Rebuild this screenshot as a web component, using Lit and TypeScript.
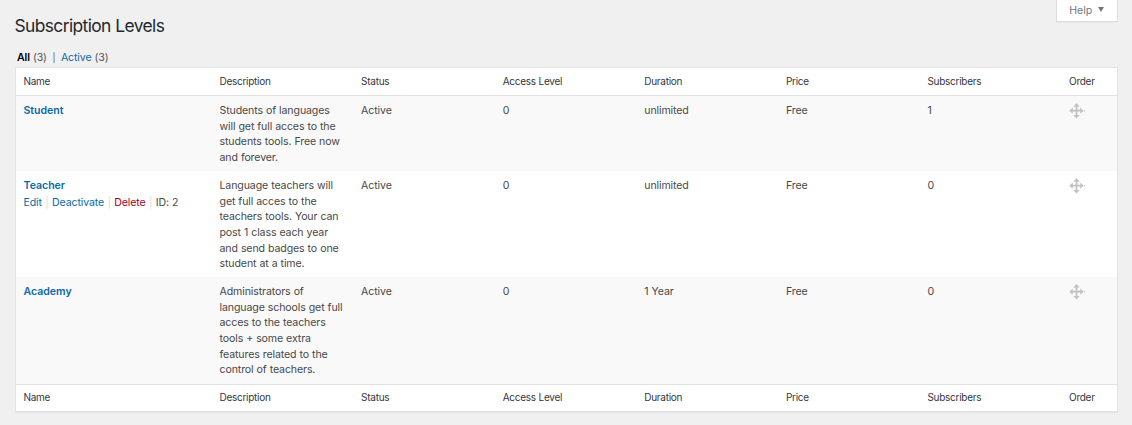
import { LitElement, html, css, svg } from "lit";
import { customElement } from "lit/decorators.js";

interface Level {
  name: string;
  lines: string[];
  duration: string;
  subscribers: number;
  actions?: boolean;
  id: number;
}

const COLUMNS = ["Name", "Description", "Status", "Access Level", "Duration", "Price", "Subscribers", "Order"];

const LEVELS: Level[] = [
  {
    id: 1,
    name: "Student",
    lines: ["Students of languages", "will get full acces to the", "students tools. Free now", "and forever."],
    duration: "unlimited",
    subscribers: 1,
  },
  {
    id: 2,
    name: "Teacher",
    lines: ["Language teachers will", "get full acces to the", "teachers tools. Your can", "post 1 class each year", "and send badges to one", "student at a time."],
    duration: "unlimited",
    subscribers: 0,
    actions: true,
  },
  {
    id: 3,
    name: "Academy",
    lines: ["Administrators of", "language schools get full", "acces to the teachers", "tools + some extra", "features related to the", "control of teachers."],
    duration: "1 Year",
    subscribers: 0,
  },
];

const moveIcon = html`<svg class="move" width="17" height="16" viewBox="0 0 17 16">
  ${svg`<path fill="#c2c2c2" d="M7.5 0 L10.7 3.5 H8.4 V6.8 H11.2 V4.6 L14.6 7.7 L11.2 10.8 V8.6 H8.4 V12 H10.7 L7.5 15.4 L4.3 12 H6.6 V8.6 H3.8 V10.8 L0.2 7.7 L3.8 4.6 V6.8 H6.6 V3.5 H4.3 Z"/>
  <rect x="15" y="7" width="1" height="1.4" fill="#c8c8c8"/>`}
</svg>`;

@customElement("app-root")
export class AppRoot extends LitElement {
  static styles = css`
    :host {
      display: block;
      box-sizing: border-box;
      height: 425px;
      padding: 0 14px 0 15px;
      overflow: hidden;
      background: #f0f0f0;
      color: #484848;
      font-family: Inter, "Liberation Sans", sans-serif;
      font-size: 10.6px;
      line-height: 15.7px;
      letter-spacing: -0.12px;
      word-spacing: 0.2px;
      white-space: nowrap;
    }
    .top {
      display: flex;
      justify-content: space-between;
      align-items: flex-start;
      height: 49px;
    }
    h1 {
      margin: 15px 0 0 -0.5px;
      color: #23282d;
      font-size: 17.4px;
      font-weight: 400;
      line-height: 22px;
      letter-spacing: -0.6px;
    }
    .help {
      box-sizing: border-box;
      display: flex;
      align-items: center;
      gap: 6px;
      width: 62px;
      height: 22px;
      padding: 0 0 0 12.3px;
      border: 1px solid #ddd;
      border-top: 0;
      background: #fff;
      box-shadow: 0 1px 0 rgba(0, 0, 0, 0.03);
      color: #72777c;
      letter-spacing: -0.08px;
    }
    .arrow {
      margin-bottom: 2px;
      border: 3px solid transparent;
      border-top: 5px solid #72777c;
      border-bottom: 0;
    }
    .filters {
      display: flex;
      height: 18px;
      padding-left: 2px;
      color: #555;
      line-height: 17px;
    }
    .filters b { margin-right: 3px; color: #000; font-weight: 600; }
    .filters a { margin-right: 3px; }
    .filters .sep { margin: 0 5.6px; font-size: 9px; }
    a { color: #0b6aa5; text-decoration: none; }
    .table {
      border: 1px solid #e3e3e3;
      background: #fff;
      box-shadow: 0 1px 1px rgba(0, 0, 0, 0.04);
    }
    .row {
      box-sizing: border-box;
      display: grid;
      grid-template-columns: 196px repeat(6, 141.6px) 1fr;
      padding: 6.9px 0 5px 7.5px;
    }
    .shade { background: #f9f9f9; }
    .heading {
      height: 28px;
      padding-top: 5.6px;
      border-bottom: 1px solid #e1e1e1;
      color: #32373c;
      font-size: 10px;
      letter-spacing: -0.27px;
    }
    .footing { height: 27px; padding-top: 5px; border-top: 1px solid #e1e1e1; border-bottom: 0; }
    .name { font-weight: 600; letter-spacing: -0.04px; }
    .actions { display: flex; gap: 3.4px; padding-top: 1.4px; letter-spacing: -0.13px; }
    .bar { color: #ddd; }
    .actions .delete { color: #a00028; }
    .line { display: block; }
    .move { display: block; margin-top: -0.4px; }
    .r1 { height: 75px; }
    .r2 { height: 106px; }
    .r3 { height: 107px; }
    .r3 .move { margin-top: 0.1px; }
  `;

  private titles(extra: string) {
    return html`<div class="row heading ${extra}">${COLUMNS.map((c) => html`<span>${c}</span>`)}</div>`;
  }

  private level(l: Level, i: number) {
    return html`<div class="row r${l.id} ${i % 2 ? "" : "shade"}">
      <div>
        <a class="name">${l.name}</a>
        ${l.actions
          ? html`<div class="actions"><a>Edit</a><span class="bar">|</span><a>Deactivate</a><span class="bar">|</span><a class="delete">Delete</a><span class="bar">|</span><span>ID: ${l.id}</span></div>`
          : ""}
      </div>
      <div>${l.lines.map((t) => html`<span class="line">${t}</span>`)}</div>
      <span>Active</span><span>0</span><span>${l.duration}</span><span>Free</span><span>${l.subscribers}</span>
      <span>${moveIcon}</span>
    </div>`;
  }

  render() {
    return html`
      <div class="top">
        <h1>Subscription Levels</h1>
        <div class="help"><span>Help</span><i class="arrow"></i></div>
      </div>
      <div class="filters"><b>All</b><span>(3)</span><span class="sep">|</span><a>Active</a><span>(3)</span></div>
      <div class="table">
        ${this.titles("")}${LEVELS.map((l, i) => this.level(l, i))}${this.titles("footing")}
      </div>
    `;
  }
}
